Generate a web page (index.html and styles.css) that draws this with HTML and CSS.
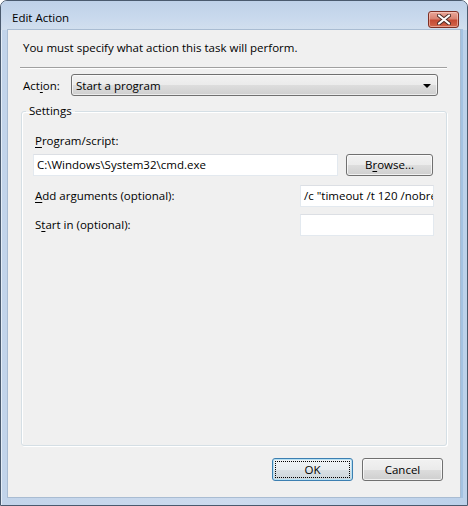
FILE: index.html
```html
<!DOCTYPE html>
<html>
<head>
<meta charset="utf-8">
<link rel="stylesheet" href="styles.css">
</head>
<body>
<div class="window">
  <div class="titlebar">
    <span class="title">Edit Action</span>
    <div class="close">
      <svg width="14" height="11" viewBox="0 0 14 11">
        <path d="M2 1.5 L12 9.5 M12 1.5 L2 9.5" stroke="#4a2a25" stroke-width="4" stroke-linecap="round"/>
        <path d="M2 1.5 L12 9.5 M12 1.5 L2 9.5" stroke="#ffffff" stroke-width="2.2" stroke-linecap="round"/>
      </svg>
    </div>
  </div>
  <div class="client">
    <div class="instruction">You must specify what action this task will perform.</div>
    <div class="separator"></div>
    <div class="action-row">
      <span class="action-label">Act<u>i</u>on:</span>
      <div class="combo">
        <span>Start a program</span>
        <span class="arrow"></span>
      </div>
    </div>
    <fieldset class="settings">
      <legend>Settings</legend>
      <div class="label first"><u>P</u>rogram/script:</div>
      <div class="program-row">
        <div class="textbox wide">C:\Windows\System32\cmd.exe</div>
        <div class="button browse">B<u>r</u>owse...</div>
      </div>
      <div class="field-row args">
        <span class="label"><u>A</u>dd arguments (optional):</span>
        <div class="textbox narrow">/c "timeout /t 120 /nobreak"</div>
      </div>
      <div class="field-row start">
        <span class="label">S<u>t</u>art in (optional):</span>
        <div class="textbox narrow"></div>
      </div>
    </fieldset>
    <div class="buttons">
      <div class="button default"><span class="focus">OK</span></div>
      <div class="button">Cancel</div>
    </div>
  </div>
</div>
</body>
</html>
```

FILE: styles.css
```css
* { box-sizing: border-box; }
html, body { margin: 0; padding: 0; }
body {
  width: 468px;
  height: 506px;
  font-family: "Open Sans", "Noto Sans", sans-serif;
  font-size: 11.5px;
  color: #000;
  background: #ffffff;
}
u { text-decoration: underline; text-underline-offset: 2px; }

.window {
  width: 468px;
  height: 506px;
  display: flex;
  flex-direction: column;
  border: 1px solid #4a5a6e;
  border-radius: 7px 7px 0 0;
  background: linear-gradient(to right, #c2d4ea 0%, #cddbee 50%, #bcd1ea 100%);
  box-shadow: inset 1px 1px 0 #e4edf7;
}
.titlebar {
  height: 29px;
  display: flex;
  align-items: flex-start;
  justify-content: space-between;
  padding: 9px 8px 0 11px;
  background: linear-gradient(to bottom, #bed1e8 0%, #c9d9ed 60%, #d2dfee 100%);
  border-radius: 6px 6px 0 0;
}
.title {
  line-height: 16px;
  color: #000;
}
.close {
  width: 31px;
  height: 17px;
  margin-top: 1px;
  border: 1px solid #7e2f24;
  border-radius: 3px;
  background: linear-gradient(to bottom, #e9a799 0%, #d98372 45%, #c54a33 55%, #d2664c 100%);
  box-shadow: inset 0 0 0 1px rgba(255,220,210,0.5);
  display: flex;
  align-items: center;
  justify-content: center;
}
.client {
  flex: 1;
  margin: 0 7px 8px 7px;
  background: #f0f0f0;
  box-shadow: 0 0 0 1px #a9bcd2, 2px 0 0 1px #a4c2e2;
  display: flex;
  flex-direction: column;
}
.instruction {
  margin-top: 10px;
  padding-left: 15px;
  line-height: 16px;
}
.separator {
  margin: 11px 13px 0 12px;
  height: 2px;
  border-top: 1px solid #a0a0a0;
  border-bottom: 1px solid #ffffff;
}
.action-row {
  margin-top: 5px;
  padding-left: 15px;
  display: flex;
  align-items: center;
  height: 22px;
}
.action-label { width: 48px; }
.combo {
  width: 367px;
  height: 22px;
  border: 1px solid #707070;
  border-radius: 3px;
  background: linear-gradient(to bottom, #f2f2f2 0%, #ebebeb 50%, #dddddd 51%, #cfcfcf 100%);
  box-shadow: inset 0 0 0 1px rgba(255,255,255,0.6);
  display: flex;
  align-items: center;
  justify-content: space-between;
  padding: 0 6px 0 4px;
}
.arrow {
  width: 0;
  height: 0;
  border-left: 4px solid transparent;
  border-right: 4px solid transparent;
  border-top: 4px solid #000;
  margin-top: 1px;
}
.settings {
  flex: 1;
  margin: 7px 13px 0 13px;
  padding: 0 12px 0 11px;
  border: 1px solid #d5dfe5;
  border-radius: 3px;
  box-shadow: inset 1px 1px 0 #ffffff, 1px 1px 0 #ffffff;
  min-width: 0;
}
.settings legend {
  margin-left: -7px;
  padding: 0 3px;
  line-height: 16px;
}
.label { padding-left: 2px; line-height: 16px; }
.label.first { margin-top: 14px; }
.program-row {
  margin-top: 5px;
  display: flex;
  align-items: center;
  gap: 8px;
}
.textbox {
  height: 22px;
  background: #ffffff;
  border: 1px solid #e3e9ef;
  border-top-color: #dcdfe4;
  padding: 0 3px;
  line-height: 20px;
  white-space: nowrap;
  overflow: hidden;
}
.textbox.wide { width: 305px; }
.textbox.narrow { width: 134px; }
.button {
  width: 81px;
  height: 23px;
  border: 1px solid #707070;
  border-radius: 3px;
  background: linear-gradient(to bottom, #f2f2f2 0%, #ebebeb 50%, #dddddd 51%, #cfcfcf 100%);
  box-shadow: inset 0 0 0 1px rgba(255,255,255,0.7);
  display: flex;
  align-items: center;
  justify-content: center;
  line-height: 16px;
}
.button.browse { width: 87px; height: 22px; }
.field-row {
  display: flex;
  align-items: center;
  justify-content: space-between;
}
.field-row.args { margin-top: 9px; }
.field-row.start { margin-top: 7px; }
.buttons {
  margin: 12px 17px 16px 0;
  display: flex;
  justify-content: flex-end;
  gap: 9px;
}
.button.default {
  border-color: #3c7fb1;
  box-shadow: inset 0 0 0 1px #b6e0f3;
  background: linear-gradient(to bottom, #f1f4f6 0%, #e8edf0 50%, #d9e0e4 51%, #ccd5da 100%);
  padding: 2px;
}
.button.default .focus {
  width: 100%;
  height: 100%;
  border: 1px dotted #000;
  display: flex;
  align-items: center;
  justify-content: center;
}
```
